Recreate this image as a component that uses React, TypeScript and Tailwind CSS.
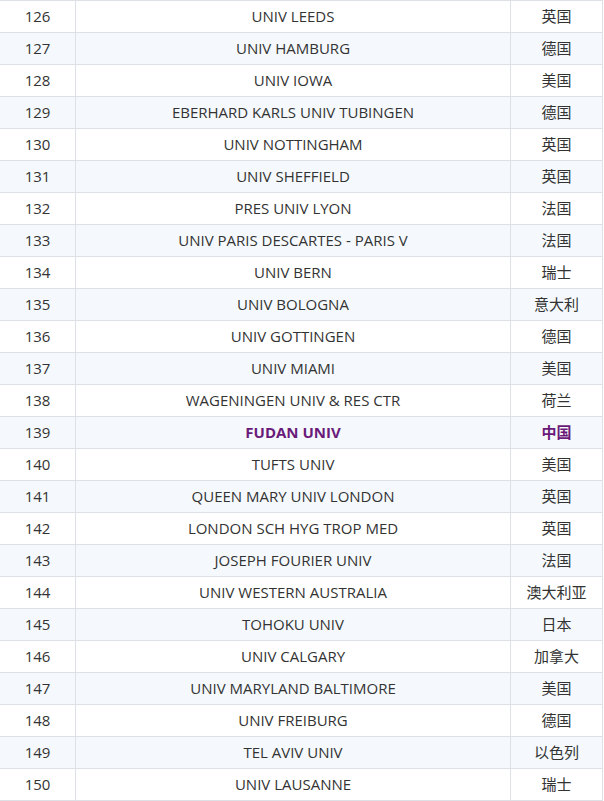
const rows: [number, string, string][] = [
  [126, "UNIV LEEDS", "英国"],
  [127, "UNIV HAMBURG", "德国"],
  [128, "UNIV IOWA", "美国"],
  [129, "EBERHARD KARLS UNIV TUBINGEN", "德国"],
  [130, "UNIV NOTTINGHAM", "英国"],
  [131, "UNIV SHEFFIELD", "英国"],
  [132, "PRES UNIV LYON", "法国"],
  [133, "UNIV PARIS DESCARTES - PARIS V", "法国"],
  [134, "UNIV BERN", "瑞士"],
  [135, "UNIV BOLOGNA", "意大利"],
  [136, "UNIV GOTTINGEN", "德国"],
  [137, "UNIV MIAMI", "美国"],
  [138, "WAGENINGEN UNIV & RES CTR", "荷兰"],
  [139, "FUDAN UNIV", "中国"],
  [140, "TUFTS UNIV", "美国"],
  [141, "QUEEN MARY UNIV LONDON", "英国"],
  [142, "LONDON SCH HYG TROP MED", "英国"],
  [143, "JOSEPH FOURIER UNIV", "法国"],
  [144, "UNIV WESTERN AUSTRALIA", "澳大利亚"],
  [145, "TOHOKU UNIV", "日本"],
  [146, "UNIV CALGARY", "加拿大"],
  [147, "UNIV MARYLAND BALTIMORE", "美国"],
  [148, "UNIV FREIBURG", "德国"],
  [149, "TEL AVIV UNIV", "以色列"],
  [150, "UNIV LAUSANNE", "瑞士"],
];

export default function App() {
  return (
    <div className="w-[603px] border-t border-[#dde0e4] bg-white font-['Open_Sans','Noto_Sans_CJK_SC',sans-serif] text-[15px] text-[#333]">
      {rows.map(([rank, name, country], i) => {
        const hl = rank === 139 ? "font-bold text-[#6a1b7a]" : "";
        return (
          <div
            key={rank}
            className={`flex h-8 border-b border-r border-[#dde0e4] ${i % 2 ? "bg-[#f5f9fd]" : "bg-white"}`}
          >
            <div className="flex w-[76px] items-center justify-center border-r border-[#dde0e4]">{rank}</div>
            <div className={`flex w-[435px] items-center justify-center border-r border-[#dde0e4] ${hl}`}>{name}</div>
            <div className={`flex flex-1 items-center justify-center ${hl}`}>{country}</div>
          </div>
        );
      })}
    </div>
  );
}
